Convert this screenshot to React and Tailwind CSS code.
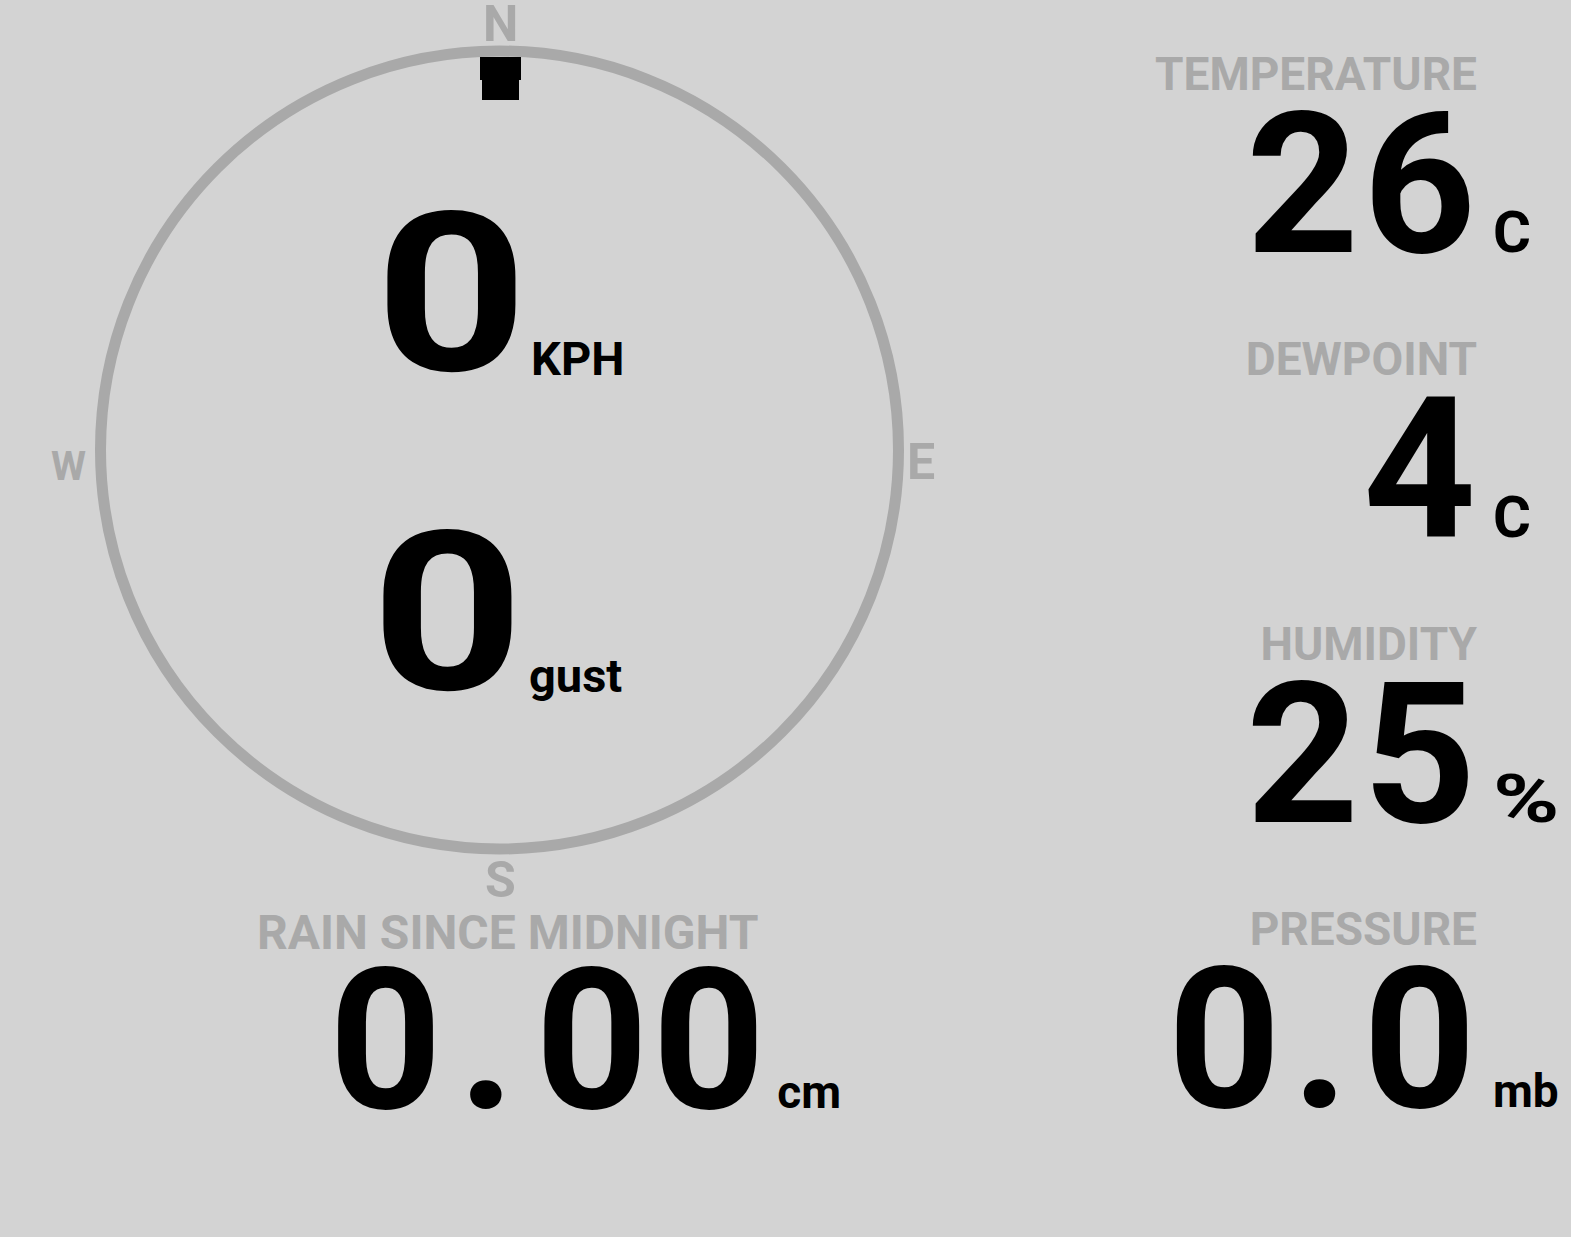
import React from 'react';

const readings = [
  { label: 'TEMPERATURE', value: '26', unit: 'C', unitClass: 'text-[58px]' },
  { label: 'DEWPOINT', value: '4', unit: 'C', unitClass: 'text-[58px]' },
  { label: 'HUMIDITY', value: '25', unit: '%', unitClass: 'text-[67px] inline-block origin-left scale-x-[1.34]' },
  { label: 'PRESSURE', value: '0.0', unit: 'mb', unitClass: 'text-[46px]', dotClass: 'ml-[7px] mr-[10px]' },
];

// big digits: the decimal point gets extra room, like the dashboard font
function BigNumber({ text, dotClass = 'ml-[14px] mr-[18px]' }) {
  const parts = text.split('.');
  if (parts.length === 1) return text;
  return (
    <>
      {parts[0]}
      <span className={dotClass}>.</span>
      {parts[1]}
    </>
  );
}

function Compass() {
  return (
    <div className="relative h-[909px] w-full">
      <svg width="1040" height="909" className="block">
        <circle cx="499.5" cy="450" r="399" fill="none" stroke="#a9a9a9" strokeWidth="11" />
        {/* wind direction pointer */}
        <path d="M480 57 L521 57 L521 80 L519 80 L519 100 L482 100 L482 80 L480 80 Z" fill="#000" />
      </svg>

      <span className="absolute left-[483px] top-[4px] text-[50px] leading-[40px] font-bold text-[#a9a9a9]">N</span>
      <span className="absolute left-[907px] top-[437px] text-[50px] leading-none font-bold text-[#a9a9a9]">E</span>
      <span className="absolute left-[51px] top-[447px] text-[40px] leading-none font-bold text-[#a9a9a9]">W</span>
      <span className="absolute left-[485px] top-[855px] text-[50px] leading-none font-bold text-[#a9a9a9]">S</span>

      <div className="absolute left-[375px] top-[183px] flex items-baseline">
        <span className="inline-block w-[125px] origin-left scale-x-[1.2] text-[222px] leading-none font-bold text-black">0</span>
        <span className="ml-[31px] translate-y-[5px] text-[47px] leading-none font-bold text-black">KPH</span>
      </div>
      <div className="absolute left-[371px] top-[502px] flex items-baseline">
        <span className="inline-block w-[125px] origin-left scale-x-[1.2] text-[222px] leading-none font-bold text-black">0</span>
        <span className="ml-[33px] translate-y-[3px] text-[47px] leading-none font-bold text-black">gust</span>
      </div>
    </div>
  );
}

function Reading({ label, value, unit, unitClass, dotClass }) {
  return (
    <div className="grid grid-cols-[1fr_96px] items-baseline mb-[64px]">
      <div className="text-right text-[46px] leading-[46px] font-bold text-[#a9a9a9] -mr-[2px]">{label}</div>
      <div />
      <div className="text-right text-[197px] leading-[175px] font-bold tracking-[4px] text-black -mr-[5px]">
        <BigNumber text={value} dotClass={dotClass} />
      </div>
      <div className="pl-[18px] leading-none font-bold text-black">
        <span className={unitClass}>{unit}</span>
      </div>
    </div>
  );
}

export default function App() {
  return (
    <div className="min-h-screen w-full bg-[#d3d3d3] font-['Roboto',sans-serif] flex overflow-hidden">
      <div className="w-[1040px] shrink-0">
        <Compass />
        <div className="pl-[257px] text-[48px] leading-[48px] font-bold text-[#a9a9a9]">RAIN SINCE MIDNIGHT</div>
        <div className="pl-[329px] flex items-baseline">
          <span className="text-[197px] leading-[167px] font-bold tracking-[4px] text-black -mr-[4px]">
            <BigNumber text="0.00" dotClass="ml-[12px] mr-[16px]" />
          </span>
          <span className="ml-[12px] text-[46px] leading-none font-bold text-black">cm</span>
        </div>
      </div>
      <div className="flex-1 pt-[51px]">
        {readings.map((r) => (
          <Reading key={r.label} {...r} />
        ))}
      </div>
    </div>
  );
}
